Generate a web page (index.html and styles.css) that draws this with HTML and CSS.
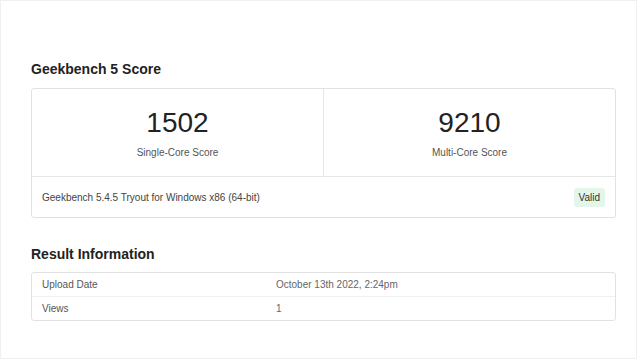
FILE: index.html
```html
<!DOCTYPE html>
<html lang="en">
<head>
    <meta charset="UTF-8" />
    <meta name="viewport" content="width=device-width, initial-scale=1" />
    <title>Geekbench 5 Result</title>
    <link rel="stylesheet" href="styles.css">
</head>
<body>
    <div class="page">
        <h2 class="section-title">Geekbench 5 Score</h2>
        <div class="card">
            <div class="scores">
                <div class="score">
                    <div class="score-value">1502</div>
                    <div class="score-label">Single-Core Score</div>
                </div>
                <div class="score">
                    <div class="score-value">9210</div>
                    <div class="score-label">Multi-Core Score</div>
                </div>
            </div>
            <div class="card-footer">
                <span>Geekbench 5.4.5 Tryout for Windows x86 (64-bit)</span>
                <span class="badge">Valid</span>
            </div>
        </div>

        <h2 class="section-title result-title">Result Information</h2>
        <div class="card info">
            <div class="info-row">
                <span class="info-name">Upload Date</span>
                <span class="info-value">October 13th 2022, 2:24pm</span>
            </div>
            <div class="info-row">
                <span class="info-name">Views</span>
                <span class="info-value">1</span>
            </div>
        </div>
    </div>
</body>
</html>
```

FILE: styles.css
```css
body {
    margin: 0;
    background: #fff;
    font-family: "Liberation Sans", Arial, sans-serif;
}
.page {
    box-sizing: border-box;
    width: 637px;
    height: 359px;
    border: 1px solid #f0f0f0;
    padding: 59px 0 0 30px;
}
.section-title {
    margin: 0 0 10px;
    font-size: 14px;
    line-height: 18px;
    font-weight: bold;
    color: #222;
}
.result-title {
    margin-top: 27px;
    margin-bottom: 9px;
}
.card {
    width: 585px;
    box-sizing: border-box;
    border: 1px solid #e2e2e2;
    border-radius: 3px;
}
.scores {
    display: flex;
    border-bottom: 1px solid #e6e6e6;
}
.score {
    flex: 1;
    text-align: center;
    padding: 18px 0 16px;
}
.score + .score {
    border-left: 1px solid #e6e6e6;
}
.score-value {
    font-size: 28px;
    line-height: 32px;
    color: #222;
}
.score-label {
    margin-top: 7px;
    font-size: 10px;
    line-height: 14px;
    color: #555;
}
.card-footer {
    display: flex;
    justify-content: space-between;
    align-items: center;
    height: 40px;
    padding: 0 10px;
    font-size: 10px;
    color: #444;
}
.badge {
    background: #e4f5e9;
    color: #333;
    padding: 0 5px;
    line-height: 19px;
    border-radius: 3px;
}
.info-row {
    display: grid;
    grid-template-columns: 234px 1fr;
    height: 23px;
    align-items: center;
    padding-left: 10px;
    font-size: 10px;
    color: #555;
}
.info-row + .info-row {
    border-top: 1px solid #f0f0f0;
}
.info-value {
    color: #666;
}
```
